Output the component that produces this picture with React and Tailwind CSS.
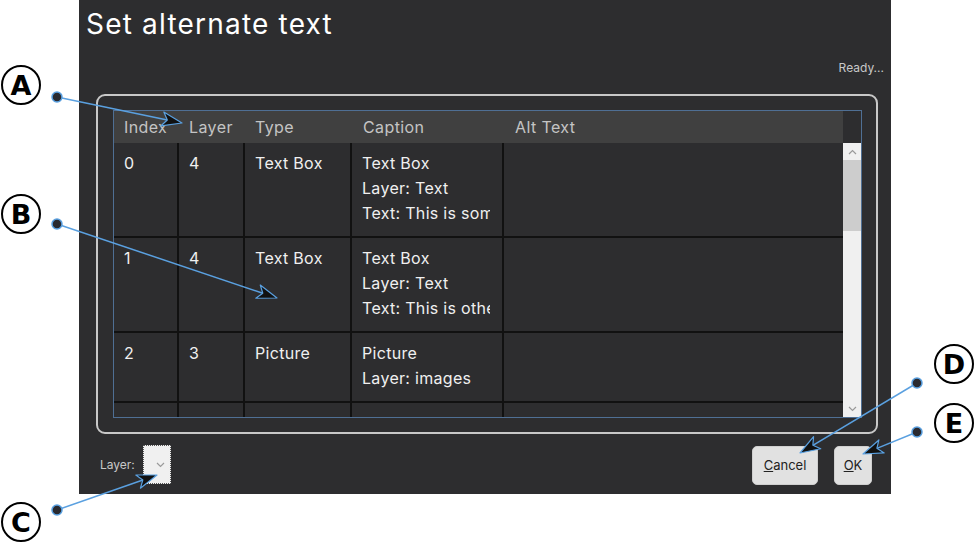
import React from "react";

const rows = [
  { index: "0", layer: "4", type: "Text Box", caption: ["Text Box", "Layer: Text", "Text: This is some text"] },
  { index: "1", layer: "4", type: "Text Box", caption: ["Text Box", "Layer: Text", "Text: This is other text"] },
  { index: "2", layer: "3", type: "Picture", caption: ["Picture", "Layer: images"] },
  { index: "3", layer: "2", type: "Text Box", caption: ["Text Box", "Layer: Text"] },
];

const callouts = [
  { letter: "A", cx: 21, cy: 85, dot: [57, 97], tip: [182, 123] },
  { letter: "B", cx: 21, cy: 214, dot: [57, 224], tip: [277, 298] },
  { letter: "C", cx: 21, cy: 522, dot: [57, 510], tip: [157, 475] },
  { letter: "D", cx: 954, cy: 364, dot: [917, 383], tip: [800, 453] },
  { letter: "E", cx: 954, cy: 423, dot: [917, 432], tip: [863, 454] },
];

const cols = "grid grid-cols-[65px_66px_107px_152px_339px]";

function arrowHead(dot, tip) {
  const dx = tip[0] - dot[0];
  const dy = tip[1] - dot[1];
  const len = Math.hypot(dx, dy);
  const ux = dx / len;
  const uy = dy / len;
  const nx = -uy;
  const ny = ux;
  const bx = tip[0] - 20 * ux;
  const by = tip[1] - 20 * uy;
  const mx = tip[0] - 15 * ux;
  const my = tip[1] - 15 * uy;
  const pts = [
    [tip[0], tip[1]],
    [bx + 7 * nx, by + 7 * ny],
    [mx, my],
    [bx - 7 * nx, by - 7 * ny],
  ];
  return { points: pts.map((p) => p.join(",")).join(" "), base: [mx, my] };
}

function Chevron({ up }) {
  return (
    <svg width="9" height="6" viewBox="0 0 9 6">
      <path
        d={up ? "M1 5 L4.5 1.5 L8 5" : "M1 1 L4.5 4.5 L8 1"}
        fill="none"
        stroke="#9a9a9a"
        strokeWidth="1.2"
      />
    </svg>
  );
}

function Cell({ children, last }) {
  return (
    <div
      className={`pl-[10px] pr-[12px] pt-2 pb-[10px] border-b-2 border-[#111] ${
        last ? "" : "border-r-2"
      }`}
    >
      <div className="overflow-hidden whitespace-nowrap">{children}</div>
    </div>
  );
}

export default function App() {
  return (
    <div className="relative w-[975px] h-[543px] bg-white overflow-hidden font-['Inter',sans-serif]">
      <div className="ml-[79px] w-[812px] h-[494px] bg-[#2d2d2f] flex flex-col">
        <h1 className="pt-[10px] pl-[7px] text-[28px] leading-none tracking-[1.2px] text-white font-normal">
          Set alternate text
        </h1>
        <div className="mt-[24px] pr-[7px] text-right text-[12px] leading-none text-[#c8c8c8]">
          Ready...
        </div>

        <div className="mt-[20px] ml-[17px] w-[782px] h-[340px] border-2 border-[#c8c8c8] rounded-[9px] pl-[15px] pr-[14px] pt-[14px] pb-[14px]">
          <div className="h-full border border-[#4f6f94] flex overflow-hidden">
            <div className="w-[729px] flex flex-col">
              <div className={`${cols} h-[32px] shrink-0 bg-[#404040] items-center text-[16px] tracking-[0.4px] text-[#c4c4c4]`}>
                <div className="pl-[10px]">Index</div>
                <div className="pl-[10px]">Layer</div>
                <div className="pl-[10px]">Type</div>
                <div className="pl-[11px]">Caption</div>
                <div className="pl-[11px]">Alt Text</div>
              </div>
              <div className="flex-1 overflow-hidden text-[16px] leading-[25px] tracking-[0.3px] text-[#f0f0f0]">
                {rows.map((r) => (
                  <div key={r.index} className={cols}>
                    <Cell>{r.index}</Cell>
                    <Cell>{r.layer}</Cell>
                    <Cell>{r.type}</Cell>
                    <Cell>
                      {r.caption.map((line) => (
                        <div key={line}>{line}</div>
                      ))}
                    </Cell>
                    <Cell last />
                  </div>
                ))}
              </div>
            </div>

            <div className="w-[18px] flex flex-col">
              <div className="h-[32px] shrink-0 bg-[#2d2d2f]" />
              <div className="flex-1 bg-[#f0f0f0] flex flex-col">
                <div className="h-[17px] flex items-center justify-center">
                  <Chevron up />
                </div>
                <div className="h-[71px] bg-[#cdcdcd]" />
                <div className="flex-1" />
                <div className="h-[17px] flex items-center justify-center">
                  <Chevron />
                </div>
              </div>
            </div>
          </div>
        </div>

        <div className="mt-[11px] flex items-start pl-[21px] pr-[19px]">
          <div className="flex items-center gap-[5px]">
            <span className="w-[38px] text-[12px] text-[#c8c8c8]">Layer:</span>
            <div className="w-[28px] h-[39px] bg-[#f0f0f0] border border-dotted border-[#555] flex items-center justify-end pr-[5px]">
              <Chevron />
            </div>
          </div>
          <div className="ml-auto flex gap-[16px] mt-[1px]">
            <button className="w-[66px] h-[39px] rounded-[5px] bg-[#e1e1e1] border border-[#cfcfcf] text-[13px] text-[#222]">
              <span className="underline">C</span>ancel
            </button>
            <button className="w-[38px] h-[39px] rounded-[5px] bg-[#e1e1e1] border border-[#cfcfcf] text-[13px] text-[#222]">
              <span className="underline">O</span>K
            </button>
          </div>
        </div>
      </div>

      <svg className="absolute inset-0 pointer-events-none" width="975" height="543">
        {callouts.map((c) => {
          const head = arrowHead(c.dot, c.tip);
          return (
            <g key={c.letter}>
              <line
                x1={c.dot[0]}
                y1={c.dot[1]}
                x2={head.base[0]}
                y2={head.base[1]}
                stroke="#5aa0e0"
                strokeWidth="1.5"
              />
              <polygon points={head.points} fill="#111" stroke="#5aa0e0" strokeWidth="1.2" strokeLinejoin="round" />
              <circle cx={c.dot[0]} cy={c.dot[1]} r="5" fill="#2a2a30" stroke="#5aa0e0" strokeWidth="1.5" />
            </g>
          );
        })}
      </svg>

      {callouts.map((c) => (
        <div
          key={c.letter}
          className="absolute w-[40px] h-[40px] -ml-[20px] -mt-[20px] rounded-full bg-white border-2 border-black flex items-center justify-center text-[27px] font-black text-black font-['DejaVu_Sans',sans-serif] leading-none"
          style={{ left: c.cx, top: c.cy }}
        >
          {c.letter}
        </div>
      ))}
    </div>
  );
}
